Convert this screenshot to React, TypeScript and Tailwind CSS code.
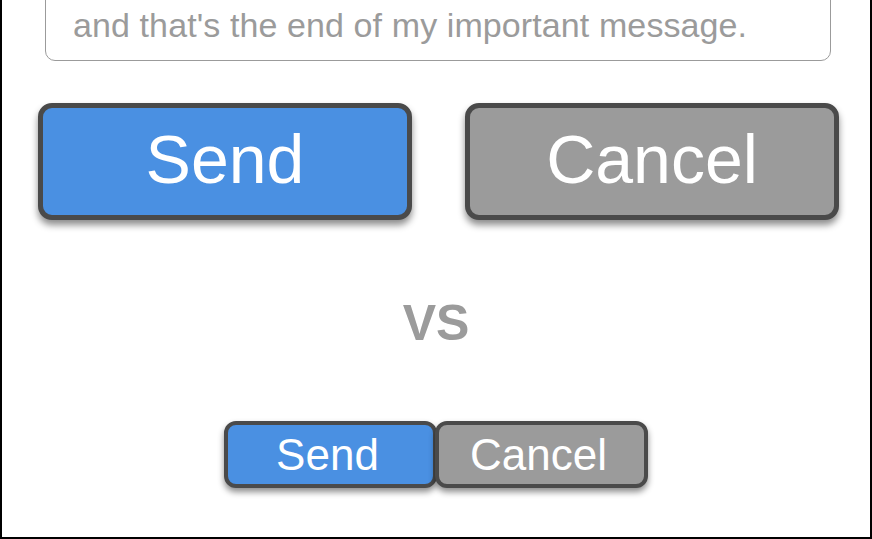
import React from 'react';

const font = { fontFamily: '"Liberation Sans", Arial, Helvetica, sans-serif' };

const BigButton: React.FC<{ label: string; color: string }> = ({ label, color }) => (
    <button
        className={`w-[374px] h-[117px] rounded-[14px] border-[5px] border-[#4a4a4a] ${color} text-white text-[68px] leading-none pb-[6px] shadow-[0_5px_7px_rgba(0,0,0,0.45)] flex items-center justify-center`}
    >
        {label}
    </button>
);

const SmallButton: React.FC<{ label: string; color: string; extra?: string }> = ({ label, color, extra = '' }) => (
    <button
        className={`w-[213px] h-[67px] rounded-[12px] border-[4px] border-[#4a4a4a] ${color} text-white text-[44px] leading-none shadow-[0_4px_6px_rgba(0,0,0,0.45)] flex items-center justify-center ${extra}`}
    >
        {label}
    </button>
);

export default function App() {
    return (
        <div style={font} className="w-[872px] h-[539px] bg-white border-l-2 border-r-2 border-b-2 border-black overflow-hidden flex flex-col">
            <div className="ml-[43px] w-[786px] h-[100px] -mt-[39px] border border-[#9b9b9b] rounded-[10px] flex items-end pb-[18px] pl-[27px]">
                <span className="text-[34px] leading-none text-[#9b9b9b] tracking-[0.1px]">and that's the end of my important message.</span>
            </div>

            <div className="mt-[42px] ml-[36px] flex gap-[53px]">
                <BigButton label="Send" color="bg-[#4a90e2]" />
                <BigButton label="Cancel" color="bg-[#9b9b9b]" />
            </div>

            <div className="mt-[78px] text-center text-[50px] font-bold leading-none text-[#9b9b9b]">VS</div>

            <div className="mt-[73px] ml-[222px] flex">
                <SmallButton label="Send" color="bg-[#4a90e2]" extra="pr-[6px]" />
                <SmallButton label="Cancel" color="bg-[#9b9b9b]" extra="-ml-[2px] pr-[6px]" />
            </div>
        </div>
    );
}
